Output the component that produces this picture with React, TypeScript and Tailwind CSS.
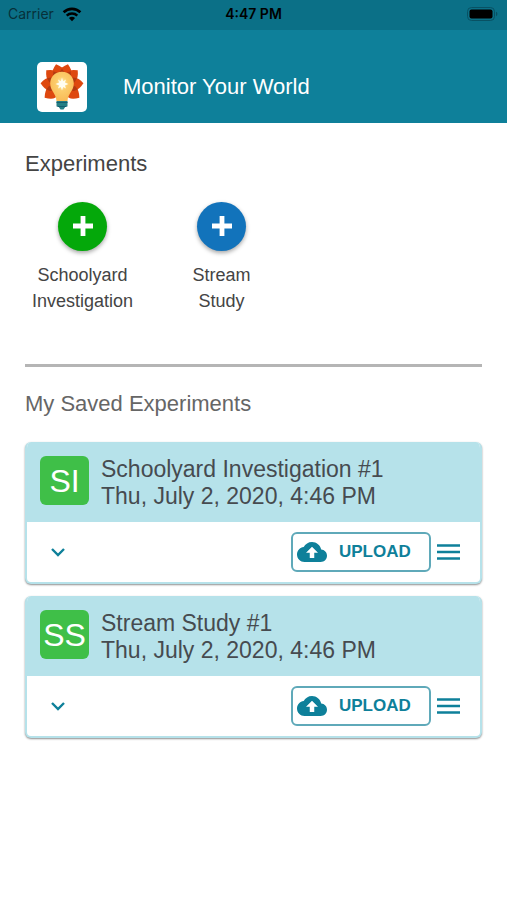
import React from "react";

function WifiIcon() {
  return (
    <svg width="20" height="15" viewBox="0 0 20 15" aria-hidden="true" fill="none" stroke="#000">
      <path d="M1.6 5.3A12 12 0 0 1 18.4 5.3" strokeWidth="2.6" />
      <path d="M4.7 8.6A7.6 7.6 0 0 1 15.3 8.6" strokeWidth="2.4" />
      <path d="M10 14.3L6.9 11.1A4.5 4.5 0 0 1 13.1 11.1Z" fill="#000" stroke="none" />
    </svg>
  );
}

function BatteryIcon() {
  return (
    <svg width="32" height="14" viewBox="0 0 32 14" aria-hidden="true">
      <rect x="0.500" y="0.500" width="27" height="13" rx="4" fill="none" stroke="#085163" />
      <rect x="2.500" y="2.500" width="23" height="9" rx="2" fill="#000" />
      <path d="M29 4.800a2.400 2.400 0 0 1 0 4.400z" fill="#085163" />
    </svg>
  );
}

function Logo() {
  const petals = [-74, -106, -137, -43, -5, -175, 36, 144];
  const folds = [-90, -122, -58, -24, -156, 16, 164];
  return (
    <svg width="50" height="50" viewBox="0 0 50 50" role="img" aria-label="Monitor Your World logo">
      <defs>
        <radialGradient id="bulb" cx="0.5" cy="0.4" r="0.6">
          <stop offset="0" stopColor="#fff0b4" />
          <stop offset="0.4" stopColor="#fccd6c" />
          <stop offset="1" stopColor="#f9bb57" />
        </radialGradient>
      </defs>
      <rect width="50" height="50" rx="5" fill="#fff" />
      {petals.map((a) => (
        <path
          key={a}
          transform={`translate(25 23) rotate(${a})`}
          d="M4 -5L13 -6.300Q17 -5.800 21.500 0Q17 5.800 13 6.300L4 5Z"
          fill="#de480f"
        />
      ))}
      {folds.map((a) => (
        <path
          key={a}
          transform={`translate(25 23) rotate(${a})`}
          d="M8 -2.800L13 -2.400L16.300 0L13 2.400L8 2.800Z"
          fill="#b33a12"
        />
      ))}
      <path
        d="M25 9.800C17.800 9.800 13.200 15.200 13.200 21.500C13.200 29 19 31 19.500 39H30.500C31 31 36.800 29 36.800 21.500C36.800 15.200 32.200 9.800 25 9.800Z"
        fill="url(#bulb)"
      />
      <path
        d="M25 15.500L26.200 19.200L29 17.500L27.900 20.600L31.500 22L27.900 23.400L29 26.500L26.200 24.900L25 28.500L23.800 24.900L21 26.500L22.100 23.400L18.500 22L22.100 20.600L21 17.500L23.800 19.200Z"
        fill="#fffdf0"
      />
      <path d="M19.500 39H30.500V44.500H28.500L26.500 47.500H23.500L21.500 44.500H19.500Z" fill="#257f85" />
      <path d="M19.500 40.500H30.500M20.500 44.500H29.500" stroke="#145f70" strokeWidth="1" />
    </svg>
  );
}

function PlusIcon() {
  return (
    <svg width="20" height="20" viewBox="0 0 20 20" aria-hidden="true">
      <path d="M7.600 0H12.400V7.600H20V12.400H12.400V20H7.600V12.400H0V7.600H7.600Z" fill="#fff" />
    </svg>
  );
}

function CloudIcon() {
  return (
    <svg width="30" height="20" viewBox="0 4 24 16" aria-hidden="true">
      <path
        d="M19.350 10.040C18.670 6.590 15.640 4 12 4 9.110 4 6.600 5.640 5.350 8.040 2.340 8.360 0 10.910 0 14c0 3.310 2.690 6 6 6h13c2.760 0 5-2.240 5-5 0-2.640-2.050-4.780-4.650-4.960z"
        fill="#0e809a"
      />
      <path d="M12 7.800L7.200 12.600H10.200V16.800H13.800V12.600H16.800Z" fill="#fff" />
    </svg>
  );
}

type StarterProps = { first: string; second: string; color: string };

function Starter({ first, second, color }: StarterProps) {
  return (
    <button type="button" className="flex w-[115px] flex-col items-center">
      <span
        className={`flex size-[49px] items-center justify-center rounded-full pb-0.5 shadow-[0_2px_4px_rgba(0,0,0,0.35)] ${color}`}
      >
        <PlusIcon />
      </span>
      <span className="mt-[11px] text-lg leading-[26px]">
        {first}
        <br />
        {second}
      </span>
    </button>
  );
}

type SavedProps = { initials: string; title: string; date: string };

function SavedCard({ initials, title, date }: SavedProps) {
  return (
    <li className="overflow-hidden rounded-md border-x-2 border-b-2 border-[#b6e2ea] bg-white shadow-[0_1px_2px_rgba(0,0,0,0.45)]">
      <div className="flex h-20 items-start gap-3 bg-[#b6e2ea] px-[13px] pt-[14px]">
        <span className="flex size-[49px] shrink-0 items-center justify-center rounded-md bg-[#3fbf48] text-[32px] leading-none text-white">
          {initials}
        </span>
        <div className="text-[23px] leading-[27px] text-[#464b50]">
          <h3>{title}</h3>
          <p>{date}</p>
        </div>
      </div>
      <div className="flex h-[60px] items-center justify-between pr-5 pl-6">
        <button type="button" aria-label={`Show details of ${title}`}>
          <svg width="14" height="9" viewBox="0 0 14 9" aria-hidden="true">
            <path d="M1 1L7 7L13 1" fill="none" stroke="#0e809a" strokeWidth="2.400" />
          </svg>
        </button>
        <div className="flex items-center gap-1.5">
          <button
            type="button"
            className="flex h-10 w-[140px] items-center gap-3 rounded-md border-2 border-[#5fa9b9] pl-1 text-[17px] font-bold text-[#0e809a]"
          >
            <CloudIcon />
            UPLOAD
          </button>
          <button type="button" aria-label={`Menu for ${title}`}>
            <svg width="23" height="16" viewBox="0 0 23 16" aria-hidden="true">
              <path d="M0 1.500H23M0 8H23M0 14.500H23" stroke="#0e809a" strokeWidth="2.400" />
            </svg>
          </button>
        </div>
      </div>
    </li>
  );
}

export default function App() {
  return (
    <div className="min-h-screen bg-white font-['Liberation_Sans',Arial,sans-serif] text-[#444]">
      <div className="grid h-[30px] grid-cols-3 items-center bg-[#0b7087] px-2 pb-0.5 font-[Inter,sans-serif] text-sm text-black">
        <span className="flex items-center gap-2">
          <span className="text-[#07303a]">Carrier</span>
          <WifiIcon />
        </span>
        <span className="text-center font-semibold">4:47 PM</span>
        <span className="flex justify-end">
          <BatteryIcon />
        </span>
      </div>
      <header className="flex h-[93px] items-center gap-9 bg-[#0e809a] px-[37px] pt-5">
        <Logo />
        <h1 className="text-[22px] text-white">Monitor Your World</h1>
      </header>
      <main className="px-[25px] pt-[25px]">
        <h2 className="text-[22px] leading-8">Experiments</h2>
        <div className="mt-[22px] flex gap-6">
          <Starter first="Schoolyard" second="Investigation" color="bg-[#04a80a]" />
          <Starter first="Stream" second="Study" color="bg-[#1273bb]" />
        </div>
        <hr className="mt-[50px] border-t-[3px] border-[#b5b5b5]" />
        <h2 className="mt-[21px] text-[22px] leading-8 text-[#666]">My Saved Experiments</h2>
        <ul className="mt-[22px] flex flex-col gap-3">
          <SavedCard initials="SI" title="Schoolyard Investigation #1" date="Thu, July 2, 2020, 4:46 PM" />
          <SavedCard initials="SS" title="Stream Study #1" date="Thu, July 2, 2020, 4:46 PM" />
        </ul>
      </main>
    </div>
  );
}
